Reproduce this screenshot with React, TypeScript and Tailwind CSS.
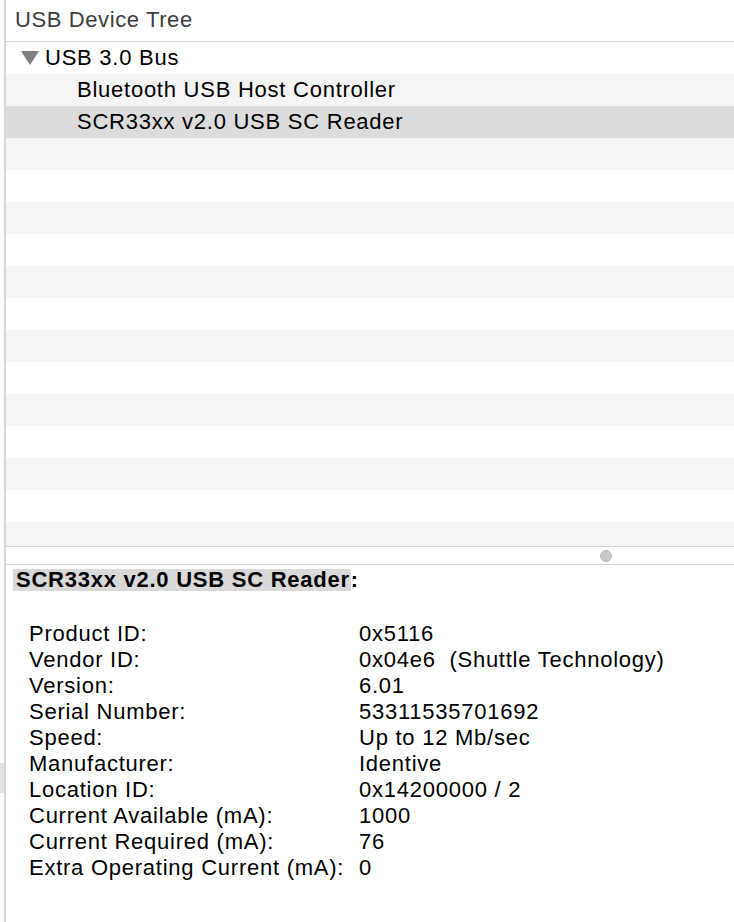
const treeRows: { label: string; level: number; expanded?: boolean }[] = [
  { label: "USB 3.0 Bus", level: 0, expanded: true },
  { label: "Bluetooth USB Host Controller", level: 1 },
  { label: "SCR33xx v2.0 USB SC Reader", level: 1 },
];

const selectedRow = 2;
const rowCount = 16;

const details: [string, string][] = [
  ["Product ID:", "0x5116"],
  ["Vendor ID:", "0x04e6  (Shuttle Technology)"],
  ["Version:", "6.01"],
  ["Serial Number:", "53311535701692"],
  ["Speed:", "Up to 12 Mb/sec"],
  ["Manufacturer:", "Identive"],
  ["Location ID:", "0x14200000 / 2"],
  ["Current Available (mA):", "1000"],
  ["Current Required (mA):", "76"],
  ["Extra Operating Current (mA):", "0"],
];

function TreeRow({ index }: { index: number }) {
  const row = treeRows[index];
  const bg =
    index === selectedRow ? "bg-[#dcdcdc]" : index % 2 === 1 ? "bg-[#f4f4f4]" : "bg-white";
  return (
    <div className={`h-[32px] shrink-0 flex items-center ${bg}`}>
      {row && row.level === 0 && (
        <>
          <svg width="18" height="14" viewBox="0 0 18 14" className="ml-[15px] mr-[6px]">
            <polygon points="0,0 18,0 9,14" fill="#808080" />
          </svg>
          <span className="text-black">{row.label}</span>
        </>
      )}
      {row && row.level === 1 && <span className="ml-[71px] text-black">{row.label}</span>}
    </div>
  );
}

export default function App() {
  return (
    <div
      className="w-[734px] h-[922px] bg-white flex overflow-hidden text-[22px] tracking-[0.75px] leading-none"
      style={{ fontFamily: '"Liberation Sans", Arial, sans-serif' }}
    >
      <div className="w-[4px] shrink-0 flex flex-col">
        <div className="h-[763px]" />
        <div className="h-[30px] bg-[#e2e2e2]" />
      </div>
      <div className="w-[2px] shrink-0 bg-[#d6d6d6]" />

      <div className="flex-1 flex flex-col min-w-0">
        <div className="h-[42px] shrink-0 border-b border-[#d3d3d3] flex items-center pl-[9px] pb-[2px] text-[#3e3e3e] tracking-[0.6px]">
          USB Device Tree
        </div>

        <div className="h-[504px] shrink-0 overflow-hidden flex flex-col">
          {Array.from({ length: rowCount }, (_, i) => (
            <TreeRow key={i} index={i} />
          ))}
        </div>

        <div className="h-[19px] shrink-0 border-y border-[#d6d6d6] flex items-center">
          <div className="ml-[594px] w-[12px] h-[12px] rounded-full bg-[#c9c9c9] border border-[#bdbdbd]" />
        </div>

        <div className="flex-1 flex flex-col pt-[4px]">
          <div className="flex items-center h-[22px] ml-[7px]">
            <span className="bg-[#d9d9d9] h-[22px] flex items-center pl-[3px] pr-[1px] font-bold text-black">
              SCR33xx v2.0 USB SC Reader
            </span>
            <span className="font-bold text-black">:</span>
          </div>

          <div className="mt-[30px] ml-[23px] grid grid-cols-[330px_1fr] text-black">
            {details.map(([k, v]) => (
              <div key={k} className="contents">
                <div className="h-[26px] flex items-center">{k}</div>
                <div className="h-[26px] flex items-center whitespace-pre">{v}</div>
              </div>
            ))}
          </div>
        </div>
      </div>
    </div>
  );
}
